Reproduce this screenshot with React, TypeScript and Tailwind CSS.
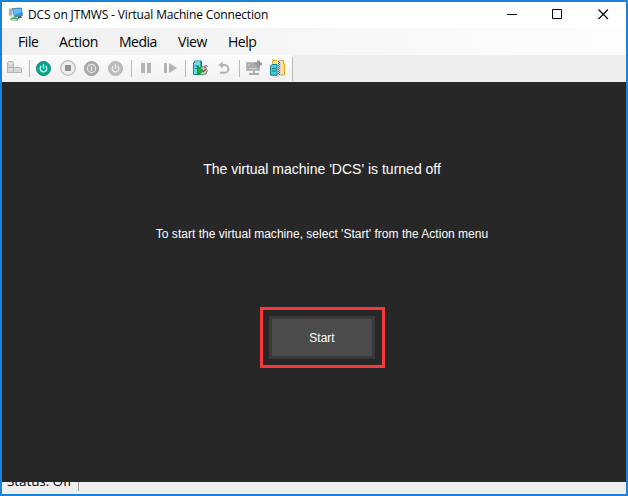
import type { ReactNode } from "react";

function Icon({ children, className = "" }: { children: ReactNode; className?: string }) {
  return (
    <svg viewBox="0 0 16 16" width="16" height="16" className={`shrink-0 ${className}`}>
      {children}
    </svg>
  );
}

function Separator({ className = "" }: { className?: string }) {
  return <div className={`h-[17px] w-px shrink-0 bg-[#b9b9b9] ${className}`} />;
}

function PowerMark({ color }: { color: string }) {
  return (
    <g fill="none" stroke={color} strokeWidth="1.3">
      <path d="M5.4 5A3.3 3.3 0 1 0 9.6 5" />
      <path d="M7.5 3.3V7.6" />
    </g>
  );
}

function AppIcon() {
  return (
    <Icon>
      <path d="M.8 1.2h3.7v9L.8 8.5z" fill="#c3c6c8" />
      <path d="M1 3h3M1 5h3M1 7h3" stroke="#858d91" strokeWidth=".8" />
      <path d="M4.5 1.5L13.5 1l1 7.7-8 1.6z" fill="#3996e0" stroke="#2872ab" strokeWidth=".7" />
      <path d="M5.2 2.2L13 1.7l.4 3L6 8z" fill="#67bbf4" />
      <path d="M10 9.8l3-.8.8 1.8-3.8 1z" fill="#454b50" />
      <path d="M2.5 12l4-1 3.5 1.2" fill="none" stroke="#48ad50" strokeWidth="2" />
      <path d="M4 13.6h6" stroke="#9fd7a2" />
    </Icon>
  );
}

function Server({ x = 0, y = 0 }: { x?: number; y?: number }) {
  return (
    <g transform={`translate(${x} ${y})`}>
      <path d="M.5 2.2L2 .5h6.5v11.8L7.5 14H.5z" fill="#20aab5" stroke="#128491" />
      <path d="M1 2.5h6v11H1z" fill="#67dce2" />
      <path d="M2 5.5h4M2 8h4" stroke="#137b86" />
      <path d="M2 1.5h5" stroke="#b6f4f3" />
    </g>
  );
}

function Toolbar() {
  return (
    <div className="flex h-[27px] shrink-0 bg-[#eeeeee]">
      <div className="flex h-[27px] w-[291px] items-center rounded-tr-[3px] bg-gradient-to-b from-[#fcfcfc] to-[#f1f1f1] pb-px pl-[4px]">
        <Icon>
          <g fill="#d6d6d6" stroke="#b4b4b4">
            <path d="M1.5 7.5V2.5L2.5 1.5h4l1 1v5z" />
            <path d="M1.5 7.5h6v5h-6zM7.5 12.5v-4l1-1h5.5l1.5 1v4z" />
          </g>
          <path d="M3 3.5h4M3 9h4M9.5 9h4" stroke="#e7e7e7" />
        </Icon>
        <Separator className="ml-[7px]" />
        <svg width="15" height="15" viewBox="0 0 15 15" className="ml-[6px] shrink-0">
          <circle cx="7.5" cy="7.5" r="7" fill="#00aa91" stroke="#147f70" />
          <PowerMark color="#e4fff9" />
        </svg>
        <Icon className="ml-[9px]">
          <circle cx="8" cy="8" r="7.3" fill="#eeeeee" stroke="#b8b8b8" strokeWidth="1.2" />
          <path d="M5 5h6v6H5z" fill="#929292" />
        </Icon>
        <svg width="15" height="15" viewBox="0 0 15 15" className="ml-[8px] shrink-0">
          <circle cx="7.5" cy="7.5" r="7" fill="#a9a9a9" stroke="#9b9b9b" />
          <circle cx="7.5" cy="7.5" r="4.1" fill="none" stroke="#e7e7e7" strokeWidth="1.2" />
          <path d="M7.5 5.3v4.4" stroke="#f0f0f0" strokeWidth="1.5" />
        </svg>
        <svg width="15" height="15" viewBox="0 0 15 15" className="ml-[9px] shrink-0">
          <circle cx="7.5" cy="7.5" r="7" fill="#bcbcbc" stroke="#b2b2b2" />
          <PowerMark color="#efefef" />
        </svg>
        <Separator className="ml-[8px]" />
        <svg width="10" height="12" className="ml-[9px] shrink-0">
          <path d="M0 1h4v10H0zM6 1h4v10H6z" fill="#b3b3b3" />
        </svg>
        <svg width="14" height="12" className="ml-[13px] shrink-0">
          <path d="M0 1h3v10H0zM5 1l8 5-8 5z" fill="#b3b3b3" />
        </svg>
        <Separator className="ml-[7px]" />
        <Icon className="ml-[6px]">
          <Server x={1} y={0.5} />
          <circle cx="11.2" cy="10.8" r="4" fill="#c9cac5" stroke="#777b73" />
          <path d="M12 6.5l2.5-1 .7 1.5" fill="none" stroke="#555" />
          <path d="M11 12l3-3" stroke="#d63832" strokeWidth="1.2" />
          <path d="M5.5 6l6 4.8-6 4.2z" fill="#12b62b" stroke="#087a23" strokeWidth=".7" />
        </Icon>
        <svg width="12" height="14" className="ml-[10px] shrink-0">
          <path d="M3 4h3.4a3.7 3.7 0 0 1 0 7.8H2" fill="none" stroke="#b2b2b2" strokeWidth="2" />
          <path d="M4.8.5v7L.5 4z" fill="#b2b2b2" />
        </svg>
        <Separator className="ml-[9px]" />
        <Icon className="ml-[6px]">
          <path d="M.5 2.5h13v8H.5z" fill="#ababab" stroke="#bababa" />
          <path d="M3 8.5h8M2 5h2" stroke="#d3d3d3" />
          <path d="M9 4h7M12.5 .5v7" stroke="#999" strokeWidth="3" />
          <path d="M8 11v4M3 14h10" stroke="#aaa" strokeWidth="2" />
        </Icon>
        <Icon className="ml-[7px]">
          <path d="M3.5.5h11v3h1v11.5h-12z" fill="#ffe278" stroke="#dba923" />
          <path d="M8 0h4v16H8z" fill="#d8d8d8" />
          <path d="M9.5 1v14M10.5 2v13" stroke="#68645e" strokeDasharray="1 1" />
          <path d="M1.5 6L3 4.5h5v10.7H1.5z" fill="#45ced6" stroke="#14818c" />
          <path d="M3 8.5h4M3 11h4" stroke="#137e87" />
        </Icon>
        <div className="ml-auto mt-[2px] h-6 w-px bg-[#b8b8b8]" />
      </div>
    </div>
  );
}

export default function App() {
  return (
    <div className="flex h-[496px] w-[628px] flex-col overflow-hidden border-2 border-[#1a82d7] bg-[#efefef] font-['Open_Sans','Noto_Sans',sans-serif] text-black">
      <header className="flex h-[26px] shrink-0 items-center bg-white pb-px pl-[6px]">
        <AppIcon />
        <h1 className="ml-1 w-[250px] whitespace-nowrap text-[12px] leading-4 tracking-[-0.15px]">DCS on JTMWS - Virtual Machine Connection</h1>
        <div className="ml-auto flex items-center gap-[35px] pr-[17px]">
          <svg width="11" height="11"><path d="M1 5.5h10" stroke="black" /></svg>
          <svg width="11" height="11"><path d="M.5.5h9v9h-9z" fill="none" stroke="black" /></svg>
          <svg width="11" height="11"><path d="M.5.5l9.5 9.5M10 .5L.5 10" stroke="black" strokeWidth="1.1" /></svg>
        </div>
      </header>
      <nav className="flex h-[27px] shrink-0 items-center bg-gradient-to-r from-[#f0f0f0] to-[#fdfdfd] pl-4 pt-px text-[14px] leading-5">
        <span className="w-[41px] tracking-[-0.4px]">File</span>
        <span className="w-[60px] tracking-[-0.35px]">Action</span>
        <span className="w-[59px] tracking-[-0.5px]">Media</span>
        <span className="w-[50px] tracking-[-0.4px]">View</span>
        <span className="tracking-[-0.45px]">Help</span>
      </nav>
      <Toolbar />
      <main className="flex h-[400px] shrink-0 flex-col items-center bg-[#272727] pl-4 pt-[77px] font-['Liberation_Sans',sans-serif] text-white">
        <p className="whitespace-nowrap text-[14px] leading-5">The virtual machine &apos;DCS&apos; is turned off</p>
        <p className="mt-[46px] whitespace-nowrap text-[12px] leading-[18px] tracking-[0.015px]">To start the virtual machine, select &apos;Start&apos; from the Action menu</p>
        <div className="mt-16 flex h-[61px] w-[125px] items-center justify-center border-[3px] border-[#fb3737]">
          <button className="h-[43px] w-[106px] border-[3px] border-[#393939] bg-[#4b4b4b] text-[12px]">Start</button>
        </div>
      </main>
      <footer className="flex h-3 shrink-0 overflow-hidden bg-[#efefef] pl-[5px]">
        <span className="-mt-[11px] w-[71px] whitespace-nowrap text-[13.5px] leading-5 tracking-[-0.1px]">Status: Off</span>
        <div className="h-[9px] w-px bg-[#a0a0a0]" />
      </footer>
    </div>
  );
}
